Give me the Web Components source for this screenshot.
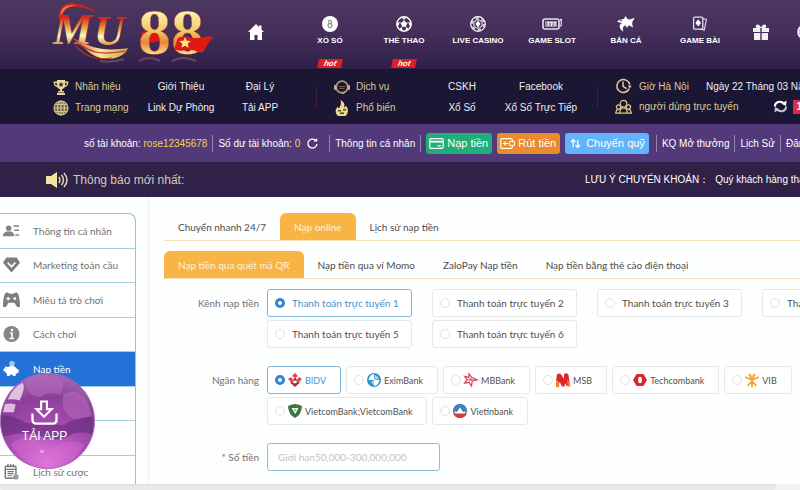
<!DOCTYPE html>
<html lang="vi">
<head>
<meta charset="utf-8">
<meta name="viewport" content="width=device-width, initial-scale=1">
<title>MU88</title>
<style>
  html, body { margin: 0; min-height: 100vh; }
  body {
    display: flex;
    flex-direction: column;
    overflow: hidden;
    background: #fdfefe;
    font-family: "Liberation Sans", Arial, sans-serif;
    font-size: 10px;
  }
  main { display: flex; flex: 1 0 auto; }
</style>
</head>
<body>
<site-header></site-header>
<info-bar></info-bar>
<account-bar></account-bar>
<notice-bar label="Thông báo mới nhất:">
  <span>LƯU Ý CHUYỂN KHOẢN：</span>
  <span>Quý khách hàng thân mến, vui lòng kiểm tra thông tin</span>
</notice-bar>
<main>
  <side-menu></side-menu>
  <deposit-panel></deposit-panel>
</main>
<download-ball>TẢI APP</download-ball>
<scroll-strip></scroll-strip>

<script>
(function () {
'use strict';

const makeTemplate = function (strings) {
    let template = document.createElement('template');
    template.innerHTML = strings[0];
    return template;
};

class BaseElement extends HTMLElement {
    constructor() {
        super();
        let shadowRoot = this.attachShadow({ mode: 'open' });
        shadowRoot.appendChild(document.importNode(this.constructor.template.content, true));
    }
}

// name: [viewBox, markup]
const icons = {
    home: ['0 0 16 16', '<path fill="currentColor" d="M8 0 0 8h2v8h4.500v-5h3v5H14V8h2l-2.500-2.500V1.500H11V3z"/>'],
    lottery: ['0 0 16 16', '<circle cx="8" cy="8" r="8" fill="#fff"/><g fill="none" stroke="#8d9a90" stroke-width="1.200"><circle cx="8" cy="6" r="1.600"/><circle cx="8" cy="9.600" r="2"/></g>'],
    football: ['0 0 16 16', '<circle cx="8" cy="8" r="7.200" fill="none" stroke="#fff" stroke-width="1.400"/><path fill="#fff" d="m8 4.800 3.100 2.300-1.200 3.600H6.100L4.900 7.100zM5 1.400h6L8 3.300zM.9 6l2.600.7-1.100 3L.9 9.800zM15.100 6l-2.600.7 1.100 3 1.500.1zM3.500 12l2.300-.2 1.100 3-1.700-.4zM12.500 12l-2.300-.2-1.100 3 1.700-.4z"/><path stroke="#fff" stroke-width=".8" d="M8 3v2M3.200 6.500l1.700.6M12.800 6.500l-1.700.6M5.500 12l.7-1.300M10.500 12l-.7-1.300"/>'],
    chip: ['0 0 16 16', '<circle cx="8" cy="8" r="7.300" fill="none" stroke="#fff" stroke-width="1.200"/><circle cx="8" cy="8" r="6.100" fill="none" stroke="#ddd2e6" stroke-width="2.200" stroke-dasharray="3.200 3.180"/><circle cx="8" cy="8" r="4.200" fill="none" stroke="#fff"/><path fill="#fff" d="M8 4.600 5.500 8 8 11.400 10.500 8z"/>'],
    slot: ['0 0 20 12', '<rect x="1" y="1" width="16" height="10" rx="2" fill="none" stroke="#e8dfed" stroke-width="1.600"/><rect x="3" y="3" width="12" height="6" fill="#9b8ca9"/><path d="M5 4.500h2L6 8M8.300 4.500h2L9.300 8M11.600 4.500h2L12.600 8M17.500 8h1.700V2" fill="none" stroke="#fff"/><circle cx="19" cy="1.800" r="1" fill="#fff"/>'],
    shark: ['0 0 18 16', '<path fill="#fff" d="M0 5.500C3 3 5.500 3.300 7 3L8.500 0l2.200 3.300c2 .5 3.500-.2 6.800-1.500-.5 2-2 3.200-2.300 5.200-.2 1.700.7 3 1 4.500-1.600-.6-3-1.700-4.200-2.200L9.800 12l-1-2.500c-1.500.3-2.500 1-2.800 2-.3 1.200 0 2.500.2 4.300C3.500 13.500 2 11.500 3 8.500L5 7.400z"/><path d="M3 4.800h2" stroke="#503a66"/>'],
    cards: ['0 0 20 20', '<path d="M13 3l5 1.200-2.600 13.200-7-1.400" fill="none" stroke="#d9cde2" stroke-width="1.500"/><rect x="2" y="1.500" width="11.500" height="15" rx="1.500" fill="#46305a" stroke="#e8dfee" stroke-width="1.600"/><path fill="#fff" d="M7.800 4.500c1 1.500 3.200 2.500 3.200 4.500 0 1.600-1.700 2-2.500 1.200l.7 2.300H6.400l.7-2.300C6.300 11 4.600 10.600 4.600 9c0-2 2.200-3 3.200-4.500z"/>'],
    gift: ['0 0 16 16', '<path fill="#f4eef7" d="M0 4h3.500C1.500 1.500 4-1 6.500 1.300L8 3.500l1.500-2.200C12-1 14.500 1.500 12.500 4H16v4H8.700V4H7.300v4H0zM1 9h6.300v7H1zM8.700 9H15v7H8.700z"/>'],
    wheel: ['0 0 16 16', '<circle cx="8" cy="8" r="6.800" fill="none" stroke="#fff" stroke-width="2"/><path d="M2 8h12M8 2v12" stroke="#fff" stroke-width="1.500"/>'],
    trophy: ['0 0 16 16', '<path fill="#e5d79a" d="M4 1h8v1.500h3.500C15.500 6 14 8 11.200 8.400 10.500 9.500 9.500 10 9 10.300V12h2v1.500H5V12h2v-1.700C6.200 10 5.500 9.500 4.800 8.400 2 8 .5 6 .5 2.500H4zM2 4c.2 1.500.8 2.300 1.900 2.700L3.800 4zm12 0h-1.800l-.1 2.700C13.200 6.300 13.800 5.500 14 4zM4 14h8v2H4z"/><path fill="#3a2c3a" d="m8 3 .8 1.600 1.700.2-1.200 1.200.3 1.800L8 7l-1.600.8.300-1.800-1.200-1.200 1.700-.2z"/>'],
    globe: ['0 0 16 16', '<g fill="none" stroke="#d3c48d" stroke-width="1.200"><circle cx="8" cy="8" r="7" fill="#6a6050"/><ellipse cx="8" cy="8" rx="3.500" ry="7"/><path d="M8 1v14M1 8h14M2 4.500h12M2 11.500h12"/></g>'],
    headset: ['0 0 18 16', '<circle cx="9" cy="8" r="6.500" fill="none" stroke="#a99678" stroke-width="2"/><path fill="#0e0b19" d="M5 6h8v4H5z"/><path d="M5 7.500h8M6 9.500h6" stroke="#8d7b62"/><rect x="0" y="5.500" width="3" height="6" rx="1.500" fill="#c3ae83"/><rect x="15" y="5.500" width="3" height="6" rx="1.500" fill="#c3ae83"/><path d="M13 13.500q-2 2-4 1.500" stroke="#d9c68e" fill="none"/>'],
    hot: ['0 0 16 16', '<path fill="#ecd98c" d="M6.500 0c4 2 4.500 5 3.500 7.500 1-.3 1.500-1 1.800-1.800C15 9 14.500 13 11.500 16H4C.5 13 1.300 9 4 6.500c0 1 .3 1.800 1 2C6.500 6 7.700 3.500 6.500 0z"/><path fill="#5b4833" d="M4 10h3v1.500H4zM9 9h3v1.500H9zM6 12.500h4V14H6z"/>'],
    clock: ['0 0 18 18', '<path d="M15.500 12A7.300 7.300 0 1 1 16 7.500" fill="none" stroke="#e3d393" stroke-width="1.700"/><path d="M8.500 4v5.500l4 2.500" fill="none" stroke="#f2e7b7" stroke-width="1.500"/><path d="m14 8.500 4 .3-2 3z" fill="#f2e7b7"/>'],
    people: ['0 0 18 16', '<g fill="none" stroke="#d8c88a" stroke-width="1.300"><circle cx="9" cy="4.500" r="3.500"/><circle cx="3.800" cy="8" r="2.300"/><circle cx="14.200" cy="8" r="2.300"/><path d="M5 14.500c0-7.500 8-7.500 8 0zM1 14.500c0-3 1-4 3-4M17 14.500c0-3-1-4-3-4M0 14.600h18"/></g>'],
    sync: ['0 0 16 14', '<path d="M2 7C2 2 8 0 12 4" fill="none" stroke="#fff" stroke-width="2.200"/><path d="M14 7c0 5-6 7-10 3" fill="none" stroke="#c9c3d2" stroke-width="2.200"/><path d="m14.500.5-.5 6-5-2.500z" fill="#fff"/><path d="m1.500 13.500.5-6L7 10z" fill="#c9c3d2"/>'],
    refresh: ['0 0 12 12', '<path d="M10.800 6.500A4.900 4.900 0 1 1 9 2.300" fill="none" stroke="#fff" stroke-width="1.500"/><path d="M7 3.900h4.200V0z" fill="#fff"/>'],
    card: ['0 0 16 12', '<rect x=".7" y=".7" width="14.600" height="10.600" rx="1.500" fill="none" stroke="#fff" stroke-width="1.300"/><path d="M1 4h14" stroke="#fff" stroke-width="2"/><path d="M9 8.500h4" stroke="#fff" stroke-width="1.300"/>'],
    cash: ['0 0 16 12', '<rect x=".7" y=".7" width="12.600" height="10.600" rx="1.500" fill="none" stroke="#fff" stroke-width="1.300"/><path d="M3 6h6M6 4 4 6l2 2" stroke="#fff" stroke-width="1.200" fill="none"/><rect x="10" y="4" width="5.500" height="4" fill="#e98c2d" stroke="#fff"/>'],
    transfer: ['0 0 12 12', '<path d="M3.500 10V2M1 4.500 3.500 1.700 6 4.500M8.500 2v8M6 7.500l2.500 2.800L11 7.500" fill="none" stroke="#fff" stroke-width="1.400"/>'],
    speaker: ['0 0 22 16', '<path fill="#f4e69b" d="M0 4h5L11 0v16l-6-4H0z"/><g fill="none" stroke="#e9dcae" stroke-width="1.400"><path d="M13 5q2 3 0 6M15.500 3q4 5 0 10M18 1q6 7 0 14"/></g>'],
    user: ['0 0 18 12', '<g fill="#858585"><circle cx="6" cy="3" r="2.900"/><path d="M0 11.500C0 8 2.500 6.700 4 6.500h4c1.500.2 4 1.500 4 5zM11 0h6v1.500h-6zM12 4.500h5V6h-5zM13 9.500h4V11h-4z"/></g>'],
    diamond: ['0 0 18 16', '<path fill="#7d7d7d" d="M3.500 0h11L18 5.500 9 16 0 5.500z"/><path d="m5 5.500 4 4.500 4-4.500" stroke="#fff" stroke-width="1.700" fill="none"/>'],
    gamepad: ['0 0 18 16', '<path fill="#7d7d7d" d="M4 0c2 0 2 1.500 5 1.500S12 0 14 0c2.500 0 4 6 4 15.500h-3L12 11H6l-3 4.500H0C0 6 1.500 0 4 0z"/><path d="M3.500 6.500h4M5.500 4.500v4" stroke="#fff" stroke-width="1.300"/><circle cx="12.500" cy="6.500" r="1.500" fill="#fff"/>'],
    info: ['0 0 16 16', '<circle cx="8" cy="8" r="8" fill="#858585"/><circle cx="8.500" cy="4" r="1.300" fill="#fff"/><path d="M6.500 7h2v5.500M6 12.500h4.500" stroke="#fff" stroke-width="1.600" fill="none"/>'],
    piggy: ['0 0 18 18', '<circle cx="9.500" cy="3" r="2.500" fill="#8fb9ef" stroke="#fff" stroke-width=".8"/><path fill="#fff" d="M2 5.500 4.500 7c3-2 7-2 9 0 1 .8 1.500 1.500 1.800 2.300H17v4h-1.500c-.5.800-1 1.300-2 1.800V17h-3v-1.500H7V17H4v-2.500C2.500 13.500 2 12.500 1.800 11.500H0v-3h1.800z"/>'],
    history: ['0 0 18 18', '<rect x="2" y="2.500" width="12" height="13.500" rx="1" fill="none" stroke="#777" stroke-width="1.600"/><path d="M5 0v4M8 0v4M11 0v4M2 6h12M4.500 8.500h7M4.500 10.800h7M4.500 13.200h5" stroke="#777" stroke-width="1.300"/><circle cx="14" cy="14.500" r="3" fill="#999"/>'],
    download: ['0 0 28 26', '<path d="M10.500 1.500h6v8h5l-8 8-8-8h5z" fill="none" stroke="#fff" stroke-width="2.200"/><path d="M1.500 14v6.500q0 4 4 4h17q4 0 4-4V14" fill="none" stroke="#fff" stroke-width="2.400"/>'],
    bidv: ['0 0 14 14', '<path fill="#e0444b" d="M7 0l3 3-3 2-3-2zM0 6l3-2 3 4-2 2zM14 6l-3-2-3 4 2 2z"/><path fill="#b8262f" d="m7 14-5-4.500L4 9l3 1.500L10 9l2 .5z"/><circle cx="7" cy="6.300" r="1.500" fill="#b8262f"/>'],
    exim: ['0 0 14 14', '<circle cx="7" cy="7" r="7" fill="#2a94cd"/><path fill="#fff" d="M7 7V1Q3 1.500 1.500 7zM7 7v6q4.500-.5 5.500-6z"/><path fill="#a5d5ee" d="M4 9q2 3 3 3V7zM8 2q3 1 4 4L7 7z"/>'],
    mb: ['0 0 14 14', '<path fill="#fff" stroke="#d8415a" stroke-width="1.200" d="m5 .8 2.600 3.500 5.600 2.500-5 1.500L7.500 13l-2.700-3.600-4.200.8 2.400-3.500L.8 3.500l4 .8z"/><path d="M4.800 4.300 8.200 8.300M7.600 4.300 4.800 9.400M3 6.700h8" stroke="#d8415a" stroke-width=".8"/>'],
    msb: ['0 0 14 14', '<path fill="#df2526" d="M1 1.500Q3.500-.5 5.500 2L8 6V1q3-2 4.500 1L14 13h-3.500L9 10l-.5 3.500H6L4 9.500 0 8z"/><path fill="#f08029" d="M0 9h3.500l-.5 5H0zM11 6q2 2 3 7.500h-2.500z"/>'],
    tech: ['0 0 14 14', '<path fill="#d9292e" d="M3.500 1h3L5 7l1.500 6h-3L0 7zM10.500 1h-3L9 7l-1.500 6h3L14 7z"/><path fill="#d9292e" d="M4 1h6L8.500 4h-3zM4 13h6l-1.500-3h-3z"/>'],
    vib: ['0 0 14 14', '<path d="M7 14V8M7 8 2.500 13M7 8l4.500 5M7 7 0 4M7 7l7-3M7 7 4 1M7 7l3-6" stroke="#f0a62d" stroke-width="1.700"/><circle cx="7" cy="3" r="1.600" fill="#f9c459"/>'],
    vcb: ['0 0 14 14', '<path fill="#39783f" d="M7 0q4 .3 7 2-.5 9-7 12Q.5 11 0 2q3-1.700 7-2z"/><path fill="#fff" d="M3.500 4h7L7.300 10z"/><path fill="#8cc665" d="M5.500 5h3.200L7.200 7.800z"/>'],
    vietin: ['0 0 14 14', '<circle cx="7" cy="7" r="6.300" fill="#fff" stroke="#3d82b9" stroke-width="1.500"/><path fill="#3d82b9" d="M0 7a7 7 0 0 1 14 0l-4 1-3-4-3 4z"/><path fill="#d33a41" d="M.5 9.500h13Q12 14 7 14T.500 9.500z"/><path fill="#fff" d="m7 3.500 3 5H4z"/>']
};

class UiIcon extends HTMLElement {
    constructor() {
        super();
        this.attachShadow({ mode: 'open' });
    }
    connectedCallback() {
        let icon = icons[this.getAttribute('name')];
        this.shadowRoot.innerHTML = `<style>
            :host{ display: block; flex: none; width: 16px; height: 16px; }
            svg{ display: block; width: 100%; height: 100%; overflow: visible; }
          </style>
          <svg viewBox="${icon[0]}" aria-hidden="true">${icon[1]}</svg>`;
    }
}

class SiteLogo extends BaseElement {}
SiteLogo.template = makeTemplate `<style>
    :host{ display: block; }
    svg{ display: block; width: 166px; height: 68px; }
  </style>
  <svg viewBox="50 0 166 68" role="img" aria-label="MU 88">
    <defs>
      <linearGradient id="mu" x1="0" y1="0" x2="0" y2="1">
        <stop offset=".25" stop-color="#d8281b"/><stop offset=".48" stop-color="#eeae4b"/>
        <stop offset=".62" stop-color="#fff4c0"/><stop offset=".8" stop-color="#d99b45"/>
      </linearGradient>
      <linearGradient id="eight" x1="0" y1="0" x2="0" y2="1">
        <stop offset=".2" stop-color="#fff3bb"/><stop offset=".5" stop-color="#f3c766"/>
        <stop offset=".65" stop-color="#e8843a"/><stop offset=".8" stop-color="#f7d987"/>
      </linearGradient>
      <linearGradient id="swoosh">
        <stop offset="0" stop-color="#d8301b"/><stop offset=".5" stop-color="#fbe79c"/><stop offset="1" stop-color="#d99a3e"/>
      </linearGradient>
    </defs>
    <path fill="#c02425" d="M61 24C54 9 66 0 78 4c9 2 15 5 22 11C88 8 72 4 66 9c-3 3-3 9-5 15z"/>
    <path fill="#e57539" d="M61 17C59 7 68 3 78 6 70 5 63 9 61 17z"/>
    <text x="53" y="44" font-family="Liberation Serif, serif" font-style="italic" font-weight="bold" font-size="44" fill="url(#mu)">M</text>
    <text x="94" y="45" font-family="Liberation Serif, serif" font-style="italic" font-weight="bold" font-size="42" fill="url(#mu)">U</text>
    <path fill="url(#swoosh)" d="M71 38c10 1 20 16 57 10-3 8-14 13-27 10-14-3-19-16-30-20z"/>
    <path fill="none" stroke="#a63b20" stroke-width="1.200" d="M75 42c9 4 17 16 50 9M76 46c8 9 18 15 36 12"/>
    <path fill="#df1a13" d="M141 33q5-4 10-1 7 4 13 0l-5 9q-9 4-15-1z"/>
    <text x="138" y="54" font-family="Liberation Serif, serif" font-weight="bold" font-size="66" fill="url(#eight)" stroke="#a62a1d" stroke-width=".4">88</text>
    <path fill="#df1a13" d="M178 38c8-4 13 1 20 0 6 0 9-3 16-1-6 4-7 10-11 15-5 2-8-3-14-2-6 0-9 2-15-1z"/>
    <path fill="#ffe57d" d="m185 37 1.700 3.700 4.100.4-3.100 2.700 1 4-3.700-2.100-3.600 2.100.9-4-3-2.700 4.100-.4z"/>
    <path fill="none" stroke="#8d6165" stroke-width="2" opacity=".6" d="M139 61q10-6 21 0M172 61q11-6 24 0M100 61q12 2 24-2"/>
  </svg>
`;

class SiteHeader extends BaseElement {}
SiteHeader.template = makeTemplate `<style>
    :host{
      display: flex;
      height: 69px;
      overflow: hidden;
      background: linear-gradient(#4d3860, #442e5a 50%, #2f2048);
    }
    site-logo{ flex: 0 0 169px; padding-left: 50px; }
    nav{ display: flex; flex: 1 0 auto; }
    a{
      display: flex;
      flex-direction: column;
      align-items: center;
      box-sizing: border-box;
      flex: 0 0 74px;
      padding-top: 16px;
      gap: 3px;
      color: #fff;
      font-size: 8px;
      line-height: 12px;
      font-weight: bold;
      text-decoration: none;
      white-space: nowrap;
    }
    a.lone{ padding-top: 24px; }
    a.small{ flex-basis: 48px; }
    a.last{ flex-basis: 40px; }
    .slot{ width: 20px; }
    .shark, .cards{ width: 18px; }
    em{
      margin-top: 9px;
      padding: 0 6px;
      transform: skewX(-12deg);
      background: #e01f20;
      line-height: 9px;
    }
  </style>
  <site-logo></site-logo>
  <nav>
    <a class="lone" href="#" aria-label="Home"><ui-icon name="home"></ui-icon></a>
    <a href="#"><ui-icon name="lottery"></ui-icon><span>XỔ SỐ</span><em>hot</em></a>
    <a href="#"><ui-icon name="football"></ui-icon><span>THỂ THAO</span><em>hot</em></a>
    <a href="#"><ui-icon name="chip"></ui-icon><span>LIVE CASINO</span></a>
    <a href="#"><ui-icon class="slot" name="slot"></ui-icon><span>GAME SLOT</span></a>
    <a href="#"><ui-icon class="shark" name="shark"></ui-icon><span>BẮN CÁ</span></a>
    <a href="#"><ui-icon class="cards" name="cards"></ui-icon><span>GAME BÀI</span></a>
    <a class="lone small" href="#" aria-label="Gift"><ui-icon name="gift"></ui-icon></a>
    <a class="lone last" href="#" aria-label="Wheel"><ui-icon name="wheel"></ui-icon></a>
  </nav>
`;

class InfoBar extends BaseElement {}
InfoBar.template = makeTemplate `<style>
    :host{
      display: flex;
      box-sizing: border-box;
      height: 55px;
      padding: 7px 0 7px 53px;
      gap: 17px;
      overflow: hidden;
      background: #1b1633;
      color: #efedf4;
      font-size: 10px;
      white-space: nowrap;
    }
    .group{
      display: grid;
      grid-template-columns: 88px 80px 78px;
      grid-auto-rows: 21px;
      align-items: center;
      justify-items: center;
    }
    .group.time{ display: flex; flex-direction: column; align-items: flex-start; }
    .row{ display: flex; align-items: center; height: 21px; gap: 17px; }
    .label{ display: flex; align-items: center; justify-self: start; gap: 6px; color: #dccb94; }
    .row .label{ gap: 7px; }
    .row ui-icon{ width: 17px; }
    .row .sync{ margin-left: 18px; width: 15px; height: 13px; }
    a{ color: inherit; text-decoration: none; }
    i{ flex: 0 0 1px; align-self: center; height: 20px; background: #47203f; }
    b{ margin-left: -12px; padding: 0 3px; background: #d8294a; line-height: 14px; }
  </style>
  <div class="group">
    <span class="label"><ui-icon name="trophy"></ui-icon>Nhãn hiệu</span><a href="#">Giới Thiệu</a><a href="#">Đại Lý</a>
    <span class="label"><ui-icon name="globe"></ui-icon>Trang mạng</span><a href="#">Link Dự Phòng</a><a href="#">Tải APP</a>
  </div>
  <i></i>
  <div class="group">
    <span class="label"><ui-icon name="headset"></ui-icon>Dịch vụ</span><a href="#">CSKH</a><a href="#">Facebook</a>
    <span class="label"><ui-icon name="hot"></ui-icon>Phổ biến</span><a href="#">Xổ Số</a><a href="#">Xổ Số Trực Tiếp</a>
  </div>
  <i></i>
  <div class="group time">
    <div class="row"><span class="label"><ui-icon name="clock"></ui-icon>Giờ Hà Nội</span><span>Ngày 22 Tháng 03 Năm</span></div>
    <div class="row"><span class="label"><ui-icon name="people"></ui-icon>người dùng trực tuyến</span><ui-icon class="sync" name="sync"></ui-icon><b>1</b></div>
  </div>
`;

class AccountBar extends BaseElement {}
AccountBar.template = makeTemplate `<style>
    :host{
      display: flex;
      align-items: center;
      box-sizing: border-box;
      height: 38px;
      padding-left: 84px;
      gap: 5px;
      overflow: hidden;
      background: #523979;
      color: #fff;
      font-size: 10px;
      white-space: nowrap;
    }
    span, a, button{ flex: none; }
    a{ color: inherit; text-decoration: none; }
    i{ flex: 0 0 1px; height: 17px; background: #9585ae; }
    b{ color: #f2d354; font-weight: normal; }
    button{
      display: flex;
      align-items: center;
      box-sizing: border-box;
      height: 21px;
      padding: 0 4px 0 3px;
      gap: 3px;
      border: 0;
      border-radius: 3px;
      color: #fff;
      font: 11px "Liberation Sans", Arial, sans-serif;
    }
    button ui-icon{ width: 15px; height: 11px; }
    .in{ background: #20ad78; }
    .out{ background: #e98c2d; }
    .move{ margin-right: 2px; background: #64b3f8; }
    .refresh{ padding: 0 6px 0 2px; background: none; }
    .refresh ui-icon{ width: 11px; }
  </style>
  <span>số tài khoản: <b>rose12345678</b></span><i></i>
  <span>Số dư tài khoản: <b>0</b></span>
  <button class="refresh" aria-label="Refresh"><ui-icon name="refresh"></ui-icon></button><i></i>
  <a href="#">Thông tin cá nhân</a><i></i>
  <button class="in"><ui-icon name="card"></ui-icon>Nạp tiền</button>
  <button class="out"><ui-icon name="cash"></ui-icon>Rút tiền</button>
  <button class="move"><ui-icon name="transfer"></ui-icon>Chuyển quỹ</button><i></i>
  <a href="#">KQ Mở thưởng</a><i></i>
  <a href="#">Lịch Sử</a><i></i>
  <a href="#">Đăng xuất</a>
`;

class NoticeBar extends BaseElement {
    connectedCallback() {
        this.shadowRoot.querySelector('strong').textContent = this.getAttribute('label');
    }
}
NoticeBar.template = makeTemplate `<style>
    :host{
      display: flex;
      align-items: center;
      box-sizing: border-box;
      height: 35px;
      padding-left: 46px;
      gap: 5px;
      overflow: hidden;
      background: #2f2147;
      color: #fff;
      font-size: 10px;
      white-space: nowrap;
    }
    ui-icon{ width: 22px; }
    strong{
      flex: 0 0 507px;
      color: #d9cbb0;
      font: 12px "Liberation Sans Narrow", "Liberation Sans", sans-serif;
    }
    div{ display: flex; align-items: baseline; gap: 6px; }
  </style>
  <ui-icon name="speaker"></ui-icon>
  <strong></strong>
  <div><slot></slot></div>
`;

class SideMenu extends BaseElement {}
SideMenu.template = makeTemplate `<style>
    :host{
      display: flex;
      box-sizing: border-box;
      flex: 0 0 149px;
      padding-top: 16px;
      border-right: 1px solid #eef0f1;
    }
    nav{
      display: grid;
      grid-auto-rows: 1fr;
      box-sizing: border-box;
      width: 136px;
      overflow: hidden;
      border: 1px solid #8fc6d6;
      border-width: 1px 1px 0 0;
      border-radius: 0 8px 0 0;
      background: #fff;
    }
    a{
      display: flex;
      align-items: center;
      box-sizing: border-box;
      min-height: 34px;
      padding-left: 3px;
      gap: 13px;
      border-bottom: 1px solid #a3d0dc;
      color: #727272;
      font: 10px Lato, sans-serif;
      text-decoration: none;
      white-space: nowrap;
    }
    a.active{ background: #2472d8; color: #fff; }
    ui-icon{ width: 17px; }
  </style>
  <nav>
    <a href="#"><ui-icon name="user"></ui-icon>Thông tin cá nhân</a>
    <a href="#"><ui-icon name="diamond"></ui-icon>Marketing toàn cầu</a>
    <a href="#"><ui-icon name="gamepad"></ui-icon>Miêu tả trò chơi</a>
    <a href="#"><ui-icon name="info"></ui-icon>Cách chơi</a>
    <a href="#" class="active"><ui-icon name="piggy"></ui-icon>Nạp tiền</a>
    <a href="#" aria-label="Rút tiền"></a>
    <a href="#" aria-label="Chuyển quỹ"></a>
    <a href="#"><ui-icon name="history"></ui-icon>Lịch sử cược</a>
  </nav>
`;

class TabBar extends BaseElement {
    connectedCallback() {
        let active = Number(this.getAttribute('active') || 0);
        let list = this.shadowRoot.querySelector('div');
        list.innerHTML = this.getAttribute('tabs').split('|').map(function (text, index) {
            return `<button role="tab" aria-selected="${index === active}">${text}</button>`;
        }).join('');
    }
}
TabBar.template = makeTemplate `<style>
    :host{ display: block; }
    div{ display: flex; border-bottom: 1px solid #f3dfb3; }
    button{
      flex: none;
      height: 27px;
      padding: 0 14px;
      border: 0;
      border-radius: 6px 6px 0 0;
      background: none;
      color: #4c4c4c;
      font: 10px Lato, sans-serif;
    }
    button[aria-selected=true]{ background: #f8b545; color: #fff3d6; }
  </style>
  <div role="tablist"></div>
`;

class RadioList extends BaseElement {
    connectedCallback() {
        let name = this.getAttribute('name');
        let root = this.shadowRoot.querySelector('div');
        root.setAttribute('aria-label', this.getAttribute('label'));
        // each option is "text" or "icon:text"
        root.innerHTML = this.getAttribute('options').split('|').map(function (option, index) {
            let parts = option.split(':');
            let icon = parts.length > 1 ? `<ui-icon name="${parts[0]}"></ui-icon>` : '';
            return `<label><input type="radio" name="${name}"${index ? '' : ' checked'}>${icon}<span>${parts[parts.length - 1]}</span></label>`;
        }).join('');
    }
}
RadioList.template = makeTemplate `<style>
    :host{ display: block; }
    div{ display: flex; flex-wrap: wrap; gap: 3px 5px; }
    :host([columns]) div{ display: grid; grid-template-columns: repeat(4, 145px); column-gap: 20px; }
    label{
      display: flex;
      align-items: center;
      box-sizing: border-box;
      height: 28px;
      padding: 0 14px 0 7px;
      gap: 3px;
      border: 1px solid #e6e8ea;
      border-radius: 3px;
      background: #fff;
      color: #505050;
      font: 9px Lato, sans-serif;
      white-space: nowrap;
    }
    :host([columns]) label{ gap: 7px; padding-right: 0; font-size: 10px; }
    label:has(:checked){ border-color: #7fb6dc; color: #4293d3; }
    input{
      appearance: none;
      box-sizing: border-box;
      flex: none;
      width: 10px;
      height: 10px;
      margin: 0;
      border: 1px solid #dfe1e3;
      border-radius: 50%;
      background: #fff;
    }
    input:checked{ border: 3px solid #2f86d4; }
    ui-icon{ width: 14px; height: 14px; }
  </style>
  <div role="radiogroup"></div>
`;

class DepositPanel extends BaseElement {}
DepositPanel.template = makeTemplate `<style>
    :host{
      display: block;
      box-sizing: border-box;
      flex: 1 1 0;
      min-width: 0;
      padding: 16px 0 16px 15px;
      overflow: hidden;
    }
    tab-bar + tab-bar{ margin-top: 10px; }
    form{
      display: grid;
      grid-template-columns: 95px minmax(0, 1fr);
      gap: 18px 8px;
      padding-top: 10px;
    }
    .name{
      color: #737373;
      font: 10px/28px Lato, sans-serif;
      text-align: right;
    }
    input{
      box-sizing: border-box;
      width: 173px;
      height: 28px;
      padding: 0 10px;
      border: 1px solid #8dbfdd;
      border-radius: 3px;
      background: #fff;
      font: 10px Lato, sans-serif;
    }
    input::placeholder{ color: #c3c3c3; }
  </style>
  <tab-bar active="1" tabs="Chuyển nhanh 24/7|Nạp online|Lịch sử nạp tiền"></tab-bar>
  <tab-bar active="0" tabs="Nạp tiền qua quét mã QR|Nạp tiền qua ví Momo|ZaloPay Nạp tiền|Nạp tiền bằng thẻ cào điện thoại"></tab-bar>
  <form>
    <span class="name">Kênh nạp tiền</span>
    <radio-list columns name="channel" label="Kênh nạp tiền" options="Thanh toán trực tuyến 1|Thanh toán trực tuyến 2|Thanh toán trực tuyến 3|Thanh toán trực tuyến 4|Thanh toán trực tuyến 5|Thanh toán trực tuyến 6"></radio-list>
    <span class="name">Ngân hàng</span>
    <radio-list name="bank" label="Ngân hàng" options="bidv:BIDV|exim:EximBank|mb:MBBank|msb:MSB|tech:Techcombank|vib:VIB|vcb:VietcomBank;VietcomBank|vietin:Vietinbank"></radio-list>
    <label class="name" for="amount">* Số tiền</label>
    <div><input id="amount" placeholder="Giới hạn50,000-300,000,000"></div>
  </form>
`;

class DownloadBall extends BaseElement {}
DownloadBall.template = makeTemplate `<style>
    :host{ position: absolute; left: 0; top: 373px; }
    button{
      display: flex;
      flex-direction: column;
      align-items: center;
      justify-content: center;
      position: relative;
      width: 95px;
      height: 96px;
      padding: 0 6px 0 0;
      gap: 4px;
      overflow: hidden;
      border: 1px solid #b06bbd;
      border-radius: 50%;
      background: #8a3f9c;
      color: #fff;
      font: 12px "Liberation Sans", Arial, sans-serif;
    }
    .shine{ position: absolute; inset: 0; width: 100%; height: 100%; }
    ui-icon{ position: relative; width: 27px; height: 25px; }
    span{ position: relative; }
  </style>
  <button>
    <svg class="shine" viewBox="0 0 95 96" aria-hidden="true">
      <defs>
        <radialGradient id="ball" cx=".5" cy=".95" r=".95">
          <stop offset="0" stop-color="#e277dc"/><stop offset=".4" stop-color="#ac4fb6"/><stop offset=".75" stop-color="#8a3f99"/><stop offset="1" stop-color="#a767b2"/>
        </radialGradient>
      </defs>
      <path fill="url(#ball)" d="M0 0h95v96H0z"/>
      <path fill="#b568bd" opacity=".6" d="M24 6q18-10 38 0 4 8-2 15-12-4-20 3-14-2-16-18zM64 20q16-6 24 8l5 14-14 5q-20-5-15-27z"/>
      <path fill="#622b77" opacity=".6" d="M0 42q14 0 26 8l38 2q12-8 30-8v18q-14-5-24 1-15 8-30 0-19-6-40 2z"/>
      <path fill="#dc70d4" opacity=".4" d="M10 72q12-12 28-3 8 14 22 3 15-7 25 1-12 22-37 23-24-1-38-24z"/>
      <path fill="#f3dcf3" opacity=".8" d="M7 26Q12 14 22 9q4 4-3 18-6-2-12-1zM4 31q5-2 11 0l-2 8H2z"/>
      <circle cx="42" cy="79" r="2" fill="#f4b5ef" opacity=".7"/>
    </svg>
    <ui-icon name="download"></ui-icon>
    <span><slot></slot></span>
  </button>
`;

class ScrollStrip extends BaseElement {}
ScrollStrip.template = makeTemplate `<style>
    :host{
      position: fixed;
      left: 0;
      right: 0;
      bottom: 0;
      height: 6px;
      background: #f2f2f2;
    }
    div{ height: 5px; width: 97%; border-top: 1px solid #dedede; border-radius: 3px; background: #e8e8e8; }
  </style>
  <div></div>
`;

window.customElements.define('ui-icon', UiIcon);
window.customElements.define('site-logo', SiteLogo);
window.customElements.define('site-header', SiteHeader);
window.customElements.define('info-bar', InfoBar);
window.customElements.define('account-bar', AccountBar);
window.customElements.define('notice-bar', NoticeBar);
window.customElements.define('side-menu', SideMenu);
window.customElements.define('tab-bar', TabBar);
window.customElements.define('radio-list', RadioList);
window.customElements.define('deposit-panel', DepositPanel);
window.customElements.define('download-ball', DownloadBall);
window.customElements.define('scroll-strip', ScrollStrip);

}());
</script>
</body>
</html>
